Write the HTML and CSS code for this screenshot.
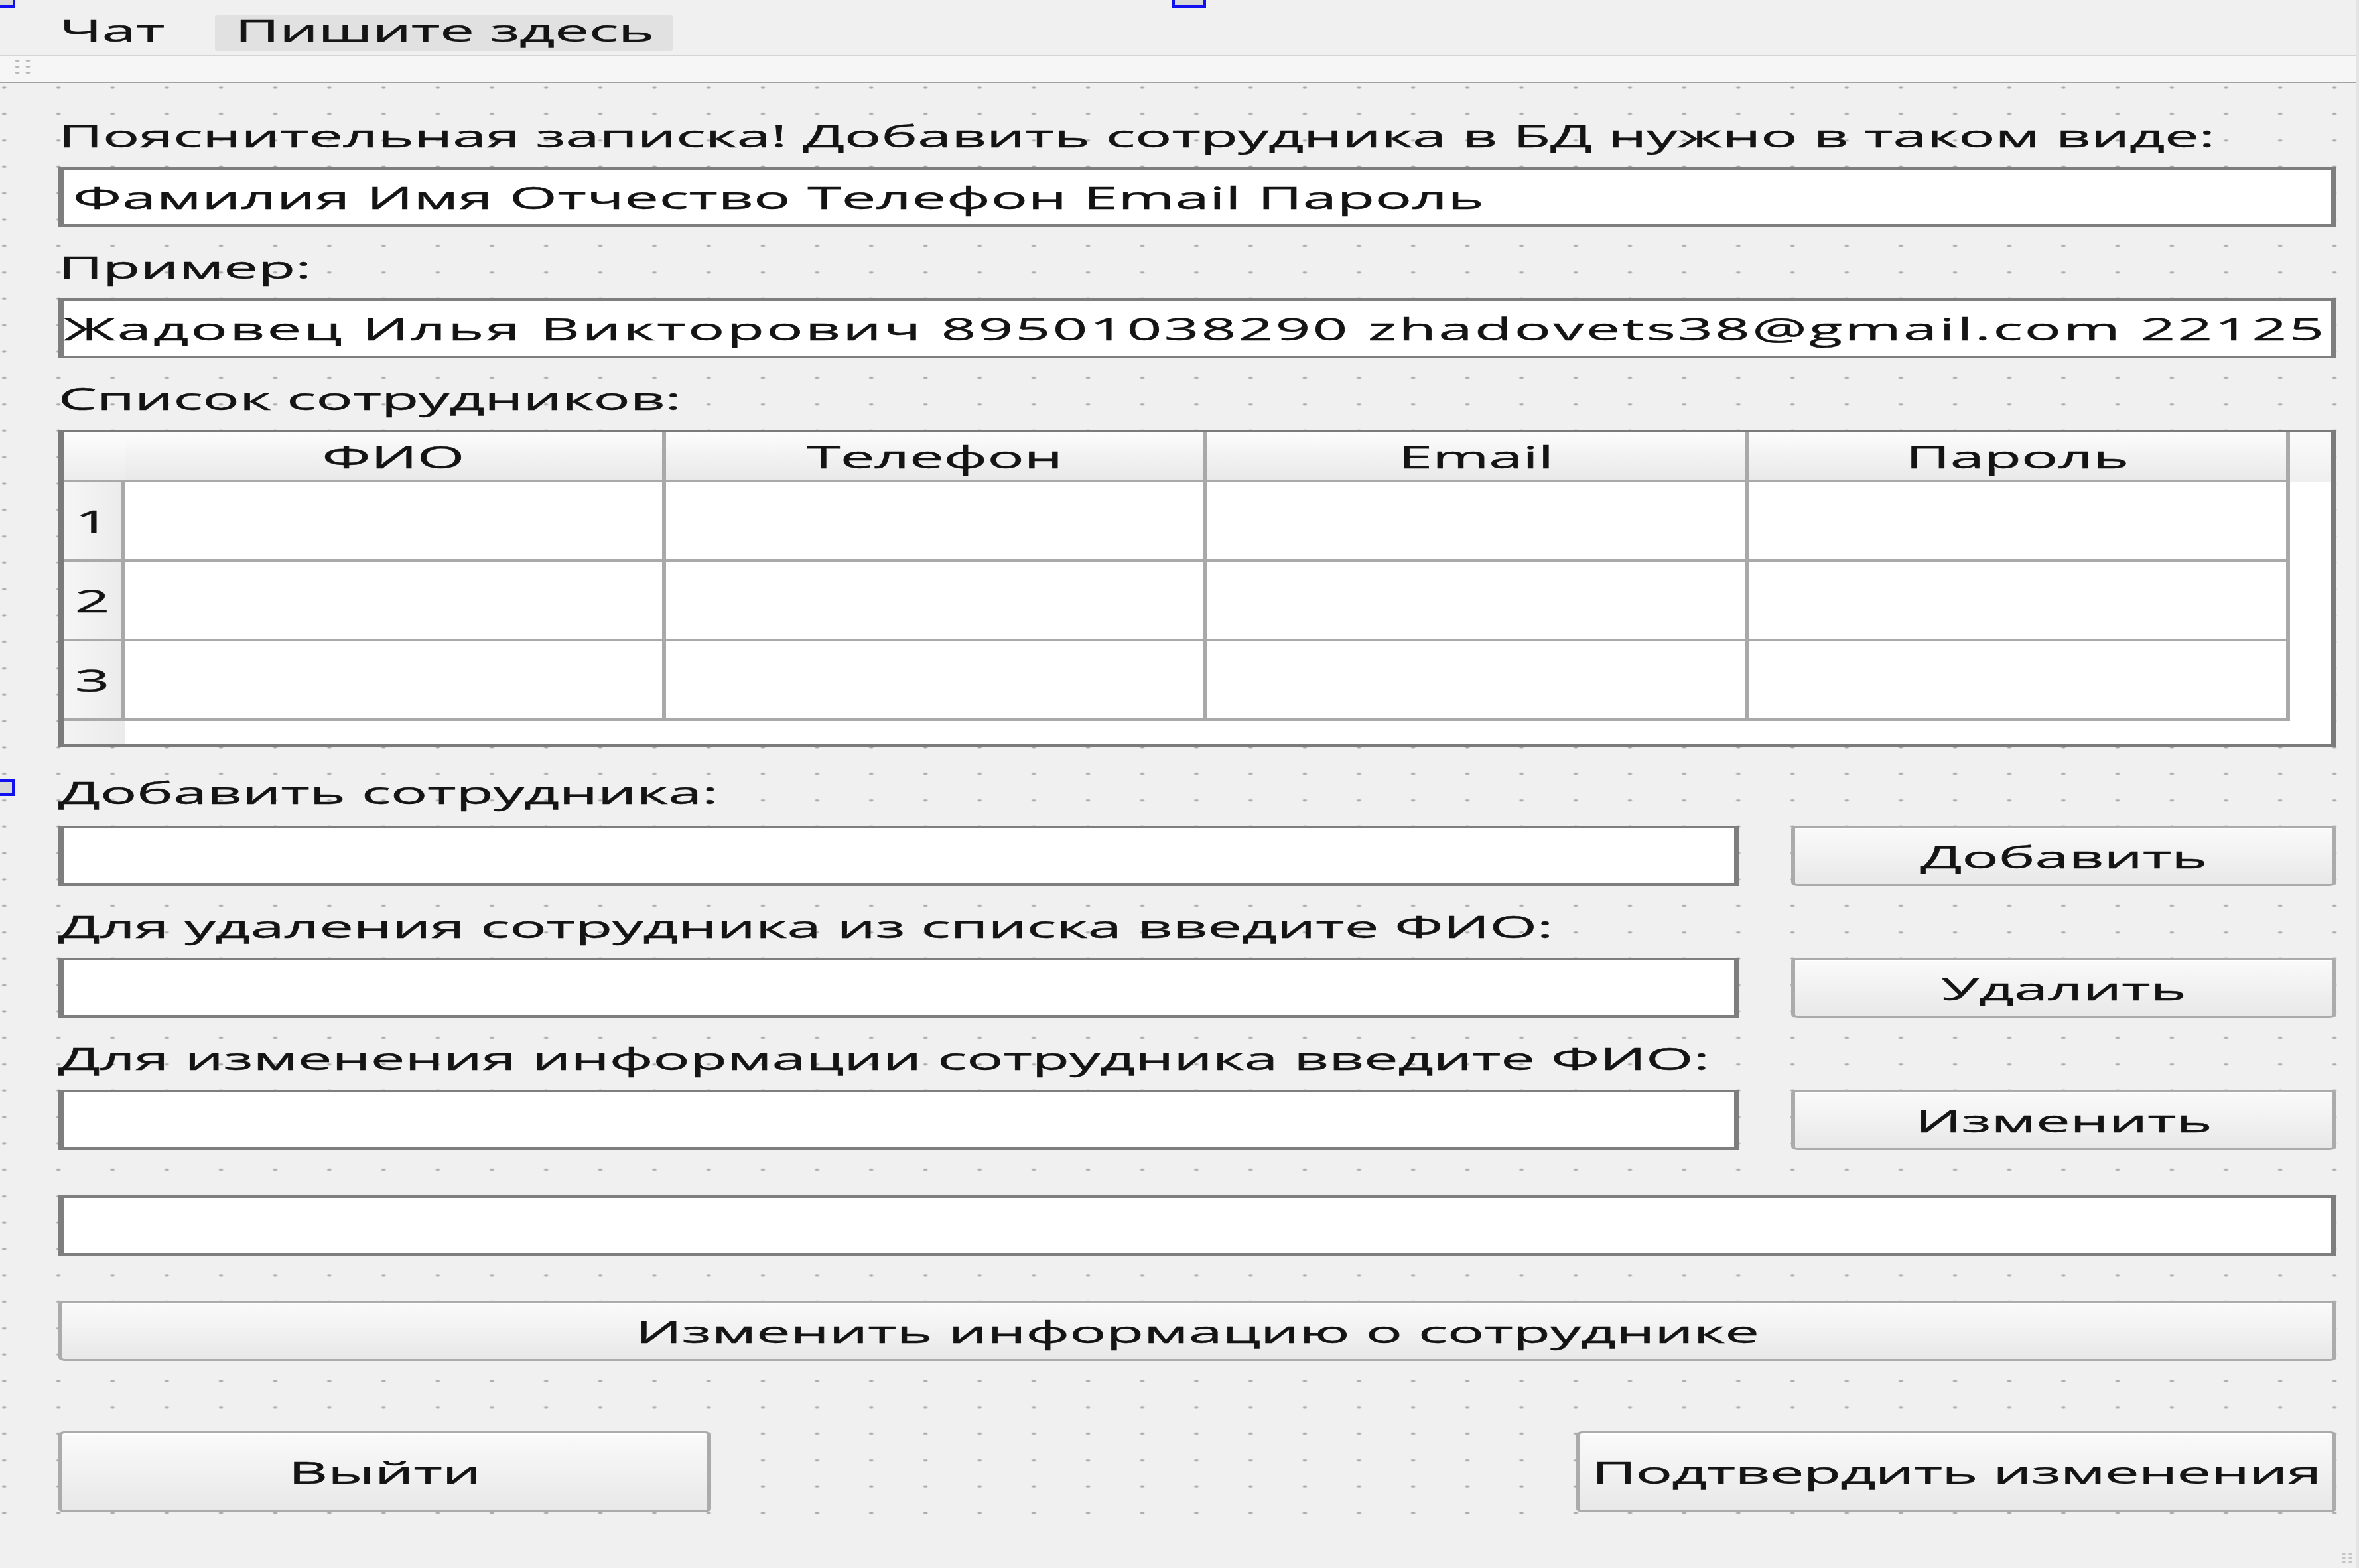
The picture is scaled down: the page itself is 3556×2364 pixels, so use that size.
FILE: index.html
```html
<!DOCTYPE html>
<html lang="ru">
<head>
<meta charset="utf-8">
<title>Форма сотрудников</title>
<link rel="stylesheet" href="styles.css">
</head>
<body>
<div class="form">
  <div class="menubar">
    <span class="menu">Чат</span>
    <span class="menu menu-new">Пишите здесь</span>
  </div>
  <div class="toolbar"><span class="grip"></span></div>
  <div class="central">
    <div class="lbl lbl-first">Пояснительная записка! Добавить сотрудника в БД нужно в таком виде:</div>
    <div class="field field-format">Фамилия Имя Отчество Телефон Email Пароль</div>
    <div class="lbl">Пример:</div>
    <div class="field field-example">Жадовец Илья Викторович 89501038290 zhadovets38@gmail.com 22125</div>
    <div class="lbl">Список сотрудников:</div>
    <div class="table">
      <div class="corner"></div>
      <div class="th">ФИО</div>
      <div class="th">Телефон</div>
      <div class="th">Email</div>
      <div class="th">Пароль</div>
      <div class="th-fill"></div>

      <div class="rh">1</div>
      <div class="td"></div><div class="td"></div><div class="td"></div><div class="td"></div>
      <div class="td-fill"></div>

      <div class="rh">2</div>
      <div class="td"></div><div class="td"></div><div class="td"></div><div class="td"></div>
      <div class="td-fill"></div>

      <div class="rh">3</div>
      <div class="td"></div><div class="td"></div><div class="td"></div><div class="td"></div>
      <div class="td-fill"></div>

      <div class="rh-fill"></div>
      <div class="bottom-fill"></div>
    </div>
    <div class="lbl lbl-add">Добавить сотрудника:</div>
    <div class="row">
      <div class="field field-row"></div>
      <div class="btn btn-side">Добавить</div>
    </div>
    <div class="lbl">Для удаления сотрудника из списка введите ФИО:</div>
    <div class="row">
      <div class="field field-row"></div>
      <div class="btn btn-side">Удалить</div>
    </div>
    <div class="lbl">Для изменения информации сотрудника введите ФИО:</div>
    <div class="row">
      <div class="field field-row"></div>
      <div class="btn btn-side">Изменить</div>
    </div>
    <div class="field field-wide"></div>
    <div class="btn btn-wide">Изменить информацию о сотруднике</div>
    <div class="actions">
      <div class="btn btn-exit">Выйти</div>
      <div class="btn btn-confirm">Подтвердить изменения</div>
    </div>
  </div>
  <div class="statusbar"><span class="size-grip"></span></div>
</div>
<span class="handle handle-tl"></span>
<span class="handle handle-tc"></span>
<span class="handle handle-ml"></span>
</body>
</html>
```

FILE: styles.css
```css
* { box-sizing: border-box; }

html, body {
  margin: 0;
  padding: 0;
}

body {
  width: 3556px;
  height: 2364px;
  overflow: hidden;
  position: relative;
  background: #f0f0f0;
  font-family: "Open Sans", "DejaVu Sans", sans-serif;
  color: #141414;
}

/* The reference form is stretched twice as wide as it is tall */
.form {
  width: 1778px;
  height: 2364px;
  transform: scaleX(2);
  transform-origin: 0 0;
  display: flex;
  flex-direction: column;
  font-size: 46px;
  -webkit-text-stroke: 0.45px #141414;
  border-right: 2px solid #e4e4e4;
}

/* ---------- menu bar ---------- */
.menubar {
  flex: none;
  height: 85px;
  display: flex;
  align-items: flex-start;
  padding: 23px 0 0 45px;
  background: #f0f0f0;
  border-bottom: 2px solid #d5d5d5;
}

.menu {
  height: 54px;
  line-height: 44px;
  white-space: nowrap;
}

.menu-new {
  margin-left: 38px;
  padding: 0 14px 0 15px;
  background: #e1e1e1;
  border-radius: 2px;
}

.toolbar {
  flex: none;
  height: 40px;
  padding: 2px 0 0 9px;
  background: #f6f6f6;
  border-bottom: 2px solid #a2a2a2;
}

.grip {
  display: block;
  width: 16px;
  height: 28px;
  background-image: radial-gradient(circle, #b9b9b9 0 1.3px, transparent 2px);
  background-size: 8px 9px;
}

/* ---------- central widget ---------- */
.central {
  flex: none;
  height: 2175px;
  display: flex;
  flex-direction: column;
  padding: 0 15px 0 44px;
  background-color: #f0f0f0;
  background-image: radial-gradient(circle, #ababab 0 1.1px, transparent 2.1px);
  background-size: 40.85px 39.8px;
  background-position: 23.6px -12.9px;
}

.statusbar {
  flex: 1;
  display: flex;
  justify-content: flex-end;
  align-items: flex-end;
  background: #f0f0f0;
}

.size-grip {
  width: 10px;
  height: 18px;
  margin: 0 2px 6px 0;
  background-image: radial-gradient(circle, #c4c4c4 0 1px, transparent 1.8px);
  background-size: 5px 6px;
}

.lbl {
  flex: none;
  height: 50px;
  line-height: 50px;
  margin: 35px 0 23px;
  white-space: nowrap;
}

.lbl-first { margin-top: 54px; }
.lbl-add { margin-top: 43px; margin-bottom: 26px; }

.field {
  flex: none;
  height: 90px;
  background: #fff;
  border: 4px solid #7e7e7e;
  line-height: 82px;
  padding-left: 7px;
  white-space: nowrap;
  overflow: hidden;
}

.field-format { letter-spacing: 0.4px; }

.field-example {
  padding-left: 0;
  letter-spacing: 1.7px;
}

.field-row {
  flex: 1;
  height: 91px;
}

.field-wide {
  height: 91px;
  margin-top: 68px;
}

.row {
  flex: none;
  display: flex;
  gap: 39px;
  height: 91px;
}

/* ---------- buttons ---------- */
.btn {
  display: flex;
  align-items: center;
  justify-content: center;
  border: 3px solid #ababab;
  border-radius: 5px;
  background: linear-gradient(#fafafa, #f1f1f1 50%, #e8e8e8);
  box-shadow: inset 0 2px 0 #ffffff;
  white-space: nowrap;
  line-height: 50px;
}

.btn-side {
  flex: none;
  width: 411px;
  height: 91px;
}

.btn-wide {
  flex: none;
  height: 91px;
  margin-top: 68px;
}

.actions {
  flex: none;
  display: flex;
  justify-content: space-between;
  height: 122px;
  margin-top: 106px;
}

.btn-exit { width: 492px; }
.btn-confirm { width: 573px; letter-spacing: -0.3px; }

/* ---------- table ---------- */
.table {
  flex: none;
  height: 478px;
  border: 4px solid #7b7b7b;
  background: #ffffff;
  display: grid;
  grid-template-columns: 46px repeat(4, 408px) 1fr;
  grid-template-rows: 75px repeat(3, 120px) 1fr;
}

.corner {
  background: linear-gradient(#fdfdfd, #ececec);
  border-bottom: 4px solid #a9a9a9;
}

.th {
  display: flex;
  align-items: center;
  justify-content: center;
  line-height: 50px;
  background: linear-gradient(#fdfdfd, #f3f3f3 45%, #e9e9e9);
  border-bottom: 4px solid #a9a9a9;
  border-right: 3px solid #a9a9a9;
}

.th-fill {
  background: linear-gradient(#fbfbfb, #efefef);
}

.rh {
  display: flex;
  align-items: center;
  justify-content: center;
  line-height: 50px;
  background: linear-gradient(90deg, #f6f6f6, #ececec);
  border-bottom: 4px solid #a9a9a9;
  border-right: 3px solid #a9a9a9;
}

.td {
  border-bottom: 4px solid #a9a9a9;
  border-right: 3px solid #a9a9a9;
}

.td-fill { background: #fff; }

.rh-fill {
  background: linear-gradient(90deg, #f3f3f3, #ebebeb);
}

.bottom-fill {
  grid-column: 2 / -1;
  background: #fff;
}

/* ---------- designer selection handles ---------- */
.handle {
  position: absolute;
  border: 4px solid #1010f0;
  background: #d8d8d8;
}

.handle-tl { left: -23px; top: -12px; width: 46px; height: 24px; }
.handle-tc { left: 1767px; top: -12px; width: 51px; height: 24px; }
.handle-ml { left: -22px; top: 1175px; width: 44px; height: 25px; }
```
